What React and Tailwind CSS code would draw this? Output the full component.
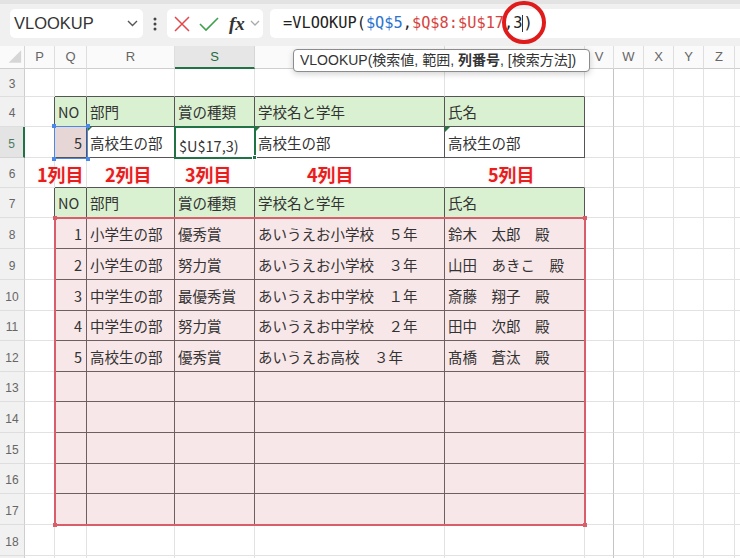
import React from "react";

const cols = [
  { id: "P", w: "w-[30px]" },
  { id: "Q", w: "w-[32px]" },
  { id: "R", w: "w-[88px]" },
  { id: "S", w: "w-[80px]" },
  { id: "T", w: "w-[190px]" },
  { id: "U", w: "w-[140px]" },
  { id: "V", w: "w-[29px]" },
  { id: "W", w: "w-[30px]" },
  { id: "X", w: "w-[30px]" },
  { id: "Y", w: "w-[30px]" },
  { id: "Z", w: "w-[31px]" },
  { id: "AA", w: "w-[60px]" },
];

const rows = [
  { n: 3, h: "h-[28px]" },
  { n: 4, h: "h-[30px]" },
  { n: 5, h: "h-[31px]" },
  { n: 6, h: "h-[30px]" },
  { n: 7, h: "h-[30px]" },
  { n: 8, h: "h-[31px]" },
  { n: 9, h: "h-[31px]" },
  { n: 10, h: "h-[31px]" },
  { n: 11, h: "h-[30px]" },
  { n: 12, h: "h-[31px]" },
  { n: 13, h: "h-[30px]" },
  { n: 14, h: "h-[31px]" },
  { n: 15, h: "h-[31px]" },
  { n: 16, h: "h-[30px]" },
  { n: 17, h: "h-[31px]" },
  { n: 18, h: "h-[31px]" },
  { n: 19, h: "h-[31px]" },
];

const header = ["NO", "部門", "賞の種類", "学校名と学年", "氏名"];

const data = {
  4: header,
  5: ["5", "高校生の部", "", "高校生の部", "高校生の部"],
  7: header,
  8: ["1", "小学生の部", "優秀賞", "あいうえお小学校　５年", "鈴木　太郎　殿"],
  9: ["2", "小学生の部", "努力賞", "あいうえお小学校　３年", "山田　あきこ　殿"],
  10: ["3", "中学生の部", "最優秀賞", "あいうえお中学校　１年", "斎藤　翔子　殿"],
  11: ["4", "中学生の部", "努力賞", "あいうえお中学校　２年", "田中　次郎　殿"],
  12: ["5", "高校生の部", "優秀賞", "あいうえお高校　３年", "髙橋　蒼汰　殿"],
};

const tableRows = [4, 5, 7, 8, 9, 10, 11, 12, 13, 14, 15, 16, 17];

function Cell({ r, ci, w }) {
  const inT = tableRows.includes(r) && ci >= 1 && ci <= 5;
  const pinkRow = r >= 8 && r <= 17;
  const rightDark = inT || (ci === 0 && tableRows.includes(r));
  const bottomDark = inT || ((r === 3 || r === 6) && ci >= 1 && ci <= 5);

  const rightCls = rightDark
    ? pinkRow
      ? "border-r-[#6e5f61]"
      : "border-r-[#555555]"
    : ci === 6
    ? "border-r-[#c4c4c4]"
    : "border-r-[#e2e2e2]";
  const bottomCls = bottomDark
    ? pinkRow
      ? "border-b-[#6e5f61]"
      : "border-b-[#555555]"
    : "border-b-[#e2e2e2]";

  let bg = "bg-white";
  if (inT && (r === 4 || r === 7)) bg = "bg-[#d9f1d0]";
  if (inT && pinkRow) bg = "bg-[#f8e7e8]";
  if (r === 5 && ci === 1) bg = "bg-[#e7d6d6]";

  const text = inT && data[r] ? data[r][ci - 1] : "";
  const numeric = ci === 1 && r !== 4 && r !== 7;
  const tri = r === 5 && (ci === 2 || ci === 4 || ci === 5);

  return (
    <div
      className={`${w} ${bg} ${rightCls} ${bottomCls} relative shrink-0 h-full border-r border-b flex items-center overflow-hidden whitespace-nowrap text-[14.5px] text-[#333] ${
        numeric ? "justify-end pr-[4px]" : "pl-[3px]"
      }`}
    >
      {tri && (
        <span className="absolute left-0 top-0 w-0 h-0 border-t-[5px] border-r-[5px] border-t-[#1d7a3a] border-r-transparent" />
      )}
      {r === 5 && ci === 3 ? (
        <div className="self-stretch flex flex-col justify-end pb-[2px] pl-[1px] leading-[18px]">
          <span>$U$17,3)</span>
        </div>
      ) : (
        <span className="pt-[1px]">{text}</span>
      )}
    </div>
  );
}

function Row({ n, h }) {
  const sel = n === 5;
  return (
    <div className={`flex ${h}`}>
      <div
        className={`w-[25px] shrink-0 h-full border-b border-r flex items-center justify-center pt-[3px] text-[12px] font-['Liberation_Sans',sans-serif] ${
          sel
            ? "bg-[#e4e4e4] border-r-[#217346] border-r-2 border-b-[#d4d4d4] text-[#4b7a63]"
            : "bg-[#f1f1f1] border-r-[#cfcfcf] border-b-[#dedede] text-[#666]"
        }`}
      >
        {n}
      </div>
      {cols.map((c, ci) => (
        <Cell key={c.id} r={n} ci={ci} w={c.w} />
      ))}
    </div>
  );
}

function Label({ cls, children }) {
  return (
    <div
      className={`absolute top-[162px] text-[18px] font-bold text-[#ea1c1c] leading-[24px] [text-shadow:0_0_2px_#fff,0_0_3px_#ddd] ${cls}`}
    >
      {children}
    </div>
  );
}

export default function App() {
  return (
    <div className="w-[740px] h-[558px] overflow-hidden relative bg-white font-['Noto_Sans_CJK_JP',sans-serif]">
      {/* formula bar */}
      <div className="h-[46px] bg-[#f0f0f0] border-t-[4px] border-[#e3e3e3] flex items-start pt-[5px]">
        <div className="ml-[10px] w-[133px] h-[29px] bg-white rounded-[5px] flex items-center justify-between pl-[4px] pr-[5px]">
          <span className="text-[16.5px] text-[#333] font-['Liberation_Sans',sans-serif]">VLOOKUP</span>
          <svg width="11" height="7" viewBox="0 0 11 7">
            <polyline points="1,1 5.5,5.5 10,1" fill="none" stroke="#555" strokeWidth="1.4" />
          </svg>
        </div>
        <div className="w-[24px] h-[29px] flex items-center justify-center">
          <svg width="4" height="14" viewBox="0 0 4 14">
            <circle cx="2" cy="2" r="1.5" fill="#444" />
            <circle cx="2" cy="7" r="1.5" fill="#444" />
            <circle cx="2" cy="12" r="1.5" fill="#444" />
          </svg>
        </div>
        <div className="w-[96px] h-[29px] bg-white rounded-[5px] flex items-center pl-[7px]">
          <svg width="16" height="16" viewBox="0 0 16 16">
            <path d="M1 1 L15 15 M15 1 L1 15" stroke="#e2474b" strokeWidth="1.5" fill="none" />
          </svg>
          <svg width="20" height="16" viewBox="0 0 20 16" className="ml-[9px]">
            <polyline points="1,8 7,14 19,2" fill="none" stroke="#3ea14f" strokeWidth="1.6" />
          </svg>
          <span className="ml-[10px] text-[19px] italic font-bold leading-none text-[#333] font-['Liberation_Serif',serif]">
            fx
          </span>
          <svg width="10" height="7" viewBox="0 0 10 7" className="ml-[5px]">
            <polyline points="1,1 5,5 9,1" fill="none" stroke="#aaa" strokeWidth="1.3" />
          </svg>
        </div>
        <div className="ml-[7px] flex-1 h-[29px] bg-white rounded-l-[5px] flex items-center pl-[13px] text-[15.3px] text-[#222] font-['DejaVu_Sans_Mono',monospace]">
          <span>=VLOOKUP(</span>
          <span className="text-[#2e74cf]">$Q$5</span>
          <span>,</span>
          <span className="text-[#d64541]">$Q$8:$U$17</span>
          <span>,3</span>
          <span className="inline-block w-0 h-[17px] border-l border-[#333]" />
          <span>)</span>
        </div>
      </div>

      {/* column headers */}
      <div className="flex h-[23px] bg-[#fafafa] font-['Liberation_Sans',sans-serif] text-[13px] text-[#666]">
        <div className="w-[25px] shrink-0 h-full border-r border-b border-r-[#d6d6d6] border-b-[#cfcfcf] flex items-start">
          <svg width="25" height="22" viewBox="0 0 25 22">
            <polygon points="22,4 22,17 9,17" fill="#d6d6d6" />
          </svg>
        </div>
        {cols.map((c) =>
          c.id === "S" ? (
            <div
              key={c.id}
              className={`${c.w} shrink-0 h-full bg-[#e6e6e6] border-r border-r-[#d6d6d6] border-b-2 border-b-[#217346] flex items-center justify-center text-[#1e6b41]`}
            >
              {c.id}
            </div>
          ) : (
            <div
              key={c.id}
              className={`${c.w} shrink-0 h-full border-r border-b border-r-[#dedede] border-b-[#cfcfcf] flex items-center justify-center`}
            >
              {c.id}
            </div>
          )
        )}
      </div>

      {/* grid */}
      <div className="flex flex-col">
        {rows.map((r) => (
          <Row key={r.n} n={r.n} h={r.h} />
        ))}
      </div>

      {/* reference highlight: $Q$8:$U$17 */}
      <div className="absolute left-[54px] top-[217px] w-[532px] h-[309px] border-2 border-[#d85f69] pointer-events-none">
        <span className="absolute -left-[3px] -top-[3px] w-[4px] h-[4px] bg-[#d85f69]" />
        <span className="absolute -right-[3px] -top-[3px] w-[4px] h-[4px] bg-[#d85f69]" />
        <span className="absolute -left-[3px] -bottom-[3px] w-[4px] h-[4px] bg-[#d85f69]" />
        <span className="absolute -right-[3px] -bottom-[3px] w-[4px] h-[4px] bg-[#d85f69]" />
      </div>

      {/* reference highlight: $Q$5 */}
      <div className="absolute left-[54px] top-[126px] w-[34px] h-[33px] border-[1.5px] border-[#4c88e6] pointer-events-none">
        <span className="absolute -left-[3px] -top-[3px] w-[4px] h-[4px] bg-[#4c88e6]" />
        <span className="absolute -right-[3px] -top-[3px] w-[4px] h-[4px] bg-[#4c88e6]" />
        <span className="absolute -left-[3px] -bottom-[3px] w-[4px] h-[4px] bg-[#4c88e6]" />
        <span className="absolute -right-[3px] -bottom-[3px] w-[4px] h-[4px] bg-[#4c88e6]" />
      </div>

      {/* active cell S5 */}
      <div className="absolute left-[174px] top-[126px] w-[82px] h-[33px] border-2 border-[#217346] pointer-events-none">
        <span className="absolute -right-[3px] -bottom-[3px] w-[5px] h-[5px] bg-[#217346] border border-white" />
      </div>

      {/* labels */}
      <Label cls="left-[37px]">1列目</Label>
      <Label cls="left-[105px]">2列目</Label>
      <Label cls="left-[185px]">3列目</Label>
      <Label cls="left-[307px]">4列目</Label>
      <Label cls="left-[488px]">5列目</Label>

      {/* function tooltip */}
      <div className="absolute left-[293px] top-[49px] w-[297px] h-[23px] bg-white border border-[#8c8c8c] rounded-[4px] shadow-[0_2px_6px_rgba(0,0,0,0.18)] flex items-center pl-[6px] text-[14px] text-[#333] whitespace-nowrap font-['Liberation_Sans','Noto_Sans_CJK_JP',sans-serif]">
        <span>VLOOKUP(検索値, 範囲,</span>
        <span className="font-bold ml-[4px]">列番号</span>
        <span>, [検索方法])</span>
      </div>

      {/* red circle */}
      <div className="absolute left-[502px] top-[1px] w-[44px] h-[43px] rounded-full border-[4px] border-[#e01b1b] pointer-events-none" />
    </div>
  );
}
